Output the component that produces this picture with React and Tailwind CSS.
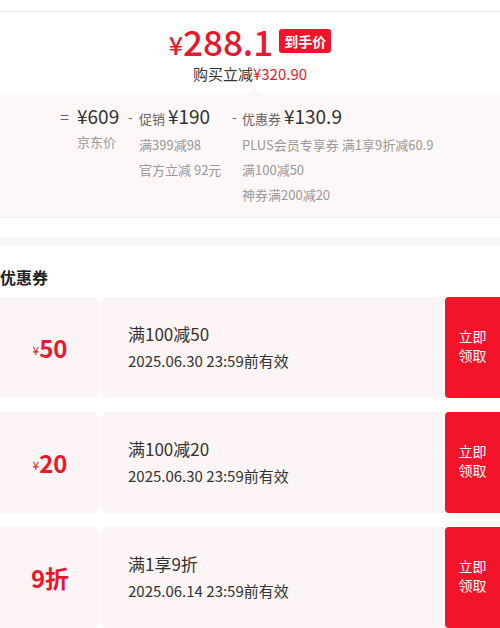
import React from 'react';

const coupons = [
  { unit: "¥", amount: "50", title: "满100减50", date: "2025.06.30 23:59前有效" },
  { unit: "¥", amount: "20", title: "满100减20", date: "2025.06.30 23:59前有效" },
  { unit: "", amount: "9折", title: "满1享9折", date: "2025.06.14 23:59前有效" },
];

function Coupon({ c }) {
  return (
    <div className="relative flex h-[101px] gap-[1px]">
      <div className="flex w-[100px] items-center justify-center rounded-r-[4px] bg-[#fdf4f5] text-[#e8192c]">
        {c.unit && <span className="mt-[5px] text-[12px] leading-none">{c.unit}</span>}
        <span className="text-[24px] font-bold leading-[30px]">{c.amount}</span>
      </div>
      <div className="flex flex-1 flex-col justify-center rounded-l-[4px] bg-[#fdf4f5] pl-[27px] pb-[2px] text-[#333]">
        <div className="text-[17px] leading-[27px]">{c.title}</div>
        <div className="text-[15px] leading-[27px]">{c.date}</div>
      </div>
      <div className="flex w-[55px] items-center justify-center rounded-l-[4px] bg-[#f4142a] pb-[4px] text-center text-[14px] leading-[19px] text-white">
        <p>立即<br />领取</p>
      </div>
      <div className="absolute left-[96px] top-[-4px] h-[8px] w-[8px] rounded-full bg-white" />
      <div className="absolute bottom-[-4px] left-[96px] h-[8px] w-[8px] rounded-full bg-white" />
    </div>
  );
}

export default function App() {
  return (
    <div className="w-[500px] h-[628px] overflow-hidden bg-white font-['Noto_Sans_CJK_SC',sans-serif]">
      <div className="h-[12px] border-b border-[#ececec]" />

      {/* price */}
      <div className="flex flex-col items-center pt-[7px]">
        <div className="flex items-center">
          <span className="mt-[6px] text-[25px] font-medium leading-none text-[#e8192c]">¥</span>
          <span className="-my-[4px] text-[35px] font-medium leading-[52px] text-[#e8192c]">288.1</span>
          <span className="ml-[6px] rounded-[3px] bg-[#f0142b] px-[5px] text-[14px] font-bold leading-[24px] text-white">到手价</span>
        </div>
        <div className="text-[15px] leading-[22px] text-[#333]">
          购买立减<span className="text-[#e8192c]">¥320.90</span>
        </div>
      </div>

      {/* breakdown */}
      <div className="relative mt-[8px] border-b border-[#eeeeee] bg-[#fdf7f7] pb-[10px] pl-[60px] pt-[10px] text-[13px] text-[#999]">
        <div className="absolute left-[251px] top-[-4px] h-[8px] w-[8px] rotate-45 bg-[#fdf7f7]" />
        <div className="flex">
          <div className="flex">
            <span className="w-[17px] text-[16px] leading-[26px] text-[#666]">=</span>
            <div className="w-[51px]">
              <div className="text-[19px] leading-[26px] text-[#333]">¥609</div>
              <div className="leading-[25px]">京东价</div>
            </div>
          </div>
          <div className="flex">
            <span className="w-[11px] text-[14px] leading-[26px] text-[#666]">-</span>
            <div className="w-[93px]">
              <div className="leading-[26px] text-[#666]">促销 <span className="text-[19px] text-[#333]">¥190</span></div>
              <div className="leading-[25px]">满399减98</div>
              <div className="leading-[25px]">官方立减 92元</div>
            </div>
          </div>
          <div className="flex">
            <span className="w-[10px] text-[14px] leading-[26px] text-[#666]">-</span>
            <div>
              <div className="leading-[26px] text-[#666]">优惠券 <span className="text-[19px] text-[#333]">¥130.9</span></div>
              <div className="leading-[25px]">PLUS会员专享券 满1享9折减60.9</div>
              <div className="leading-[25px]">满100减50</div>
              <div className="leading-[25px]">神券满200减20</div>
            </div>
          </div>
        </div>
      </div>

      <div className="mt-[19px] h-[8px] bg-[#f6f7fb]" />

      <div className="pt-[21px] text-[16px] font-bold leading-[22px] text-[#222]">优惠券</div>

      <div className="mt-[9px] flex flex-col gap-[14px]">
        {coupons.map((c, i) => (
          <Coupon key={i} c={c} />
        ))}
      </div>
    </div>
  );
}
